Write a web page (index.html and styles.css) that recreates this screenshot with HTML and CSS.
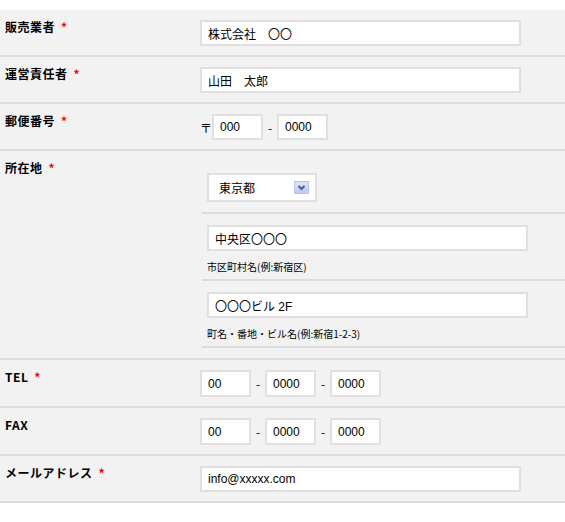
FILE: index.html
```html
<!DOCTYPE html>
<html lang="ja">
<head>
<meta charset="utf-8">
<title>フォーム</title>
<link rel="stylesheet" href="styles.css">
</head>
<body>
<div class="form">
  <div class="row">
    <div class="label">販売業者<span class="req">*</span></div>
    <div class="value"><input class="field wide" type="text" value="株式会社　〇〇"></div>
  </div>
  <div class="row">
    <div class="label">運営責任者<span class="req">*</span></div>
    <div class="value"><input class="field wide" type="text" value="山田　太郎"></div>
  </div>
  <div class="row">
    <div class="label">郵便番号<span class="req">*</span></div>
    <div class="value">
      <div class="group"><span class="zip">〒</span><input class="field short" type="text" value="000"><span class="dash">-</span><input class="field short" type="text" value="0000"></div>
    </div>
  </div>
  <div class="row">
    <div class="label">所在地<span class="req">*</span></div>
    <div class="value address">
      <div class="sub first">
        <div class="select"><span class="select-text">東京都</span>
          <svg class="select-btn" width="15" height="13" viewBox="0 0 15 13">
            <defs><linearGradient id="g" x1="0" y1="0" x2="0" y2="1"><stop offset="0" stop-color="#dfe8fb"/><stop offset="1" stop-color="#b9cbf0"/></linearGradient></defs>
            <rect x="0.5" y="0.5" width="14" height="12" fill="url(#g)" stroke="#b3c5ea"/>
            <polyline points="4.5,5 7.5,8 10.5,5" fill="none" stroke="#4c5f86" stroke-width="2"/>
          </svg>
        </div>
      </div>
      <div class="sub">
        <input class="field wide" type="text" value="中央区〇〇〇">
        <div class="hint">市区町村名(例:新宿区)</div>
      </div>
      <div class="sub">
        <input class="field wide" type="text" value="〇〇〇ビル 2F">
        <div class="hint">町名・番地・ビル名(例:新宿1-2-3)</div>
      </div>
    </div>
  </div>
  <div class="row">
    <div class="label">TEL<span class="req">*</span></div>
    <div class="value">
      <div class="group"><input class="field short tall" type="text" value="00"><span class="dash">-</span><input class="field short tall" type="text" value="0000"><span class="dash">-</span><input class="field short tall" type="text" value="0000"></div>
    </div>
  </div>
  <div class="row">
    <div class="label">FAX</div>
    <div class="value">
      <div class="group"><input class="field short tall" type="text" value="00"><span class="dash">-</span><input class="field short tall" type="text" value="0000"><span class="dash">-</span><input class="field short tall" type="text" value="0000"></div>
    </div>
  </div>
  <div class="row">
    <div class="label">メールアドレス<span class="req">*</span></div>
    <div class="value"><input class="field wide" type="text" value="info@xxxxx.com"></div>
  </div>
</div>
</body>
</html>
```
FILE: styles.css
```css
* { box-sizing: border-box; }
body {
  margin: 0;
  padding-top: 10px;
  background: #fff;
  font-family: "Noto Sans CJK JP", "DejaVu Sans", sans-serif;
  color: #000;
}
.form { width: 565px; }
.row {
  display: grid;
  grid-template-columns: 200px 1fr;
  background: #f2f2f2;
  border-bottom: 2px solid #dcdcdc;
}
.label {
  padding: 9px 0 0 5px;
  font-size: 12px;
  font-weight: bold;
  line-height: 16px;
  letter-spacing: 0.5px;
}
.req {
  color: #f00;
  margin-left: 6px;
  font-size: 12px;
}
.value {
  padding: 10px 0 9px;
}
.field {
  display: block;
  height: 26px;
  padding: 0 6px;
  border: 2px solid #e0e0e0;
  background: #fff;
  font-family: "Liberation Sans", "Noto Sans CJK JP", sans-serif;
  font-size: 12px;
  color: #000;
  outline: none;
}
.wide { width: 321px; }
.short { width: 51px; }
.tall { height: 27px; }
.group {
  display: flex;
  align-items: center;
}
.zip {
  font-size: 12px;
  margin-right: 0;
}
.dash {
  font-size: 12px;
  width: 14px;
  text-align: center;
}
.address { padding: 11px 0 10px; }
.sub {
  margin-left: 2px;
  padding: 11px 5px 5px;
  border-bottom: 2px solid #dcdcdc;
}
.sub.first { padding-bottom: 10px; }
.select {
  width: 110px;
  height: 29px;
  display: flex;
  align-items: center;
  justify-content: space-between;
  padding: 0 6px 0 10px;
  background: #fff;
  border: 2px solid #e0e0e0;
  font-size: 12px;
}
.select-btn { display: block; }
.hint {
  margin-top: 9px;
  font-size: 10px;
  line-height: 14px;
}
```
